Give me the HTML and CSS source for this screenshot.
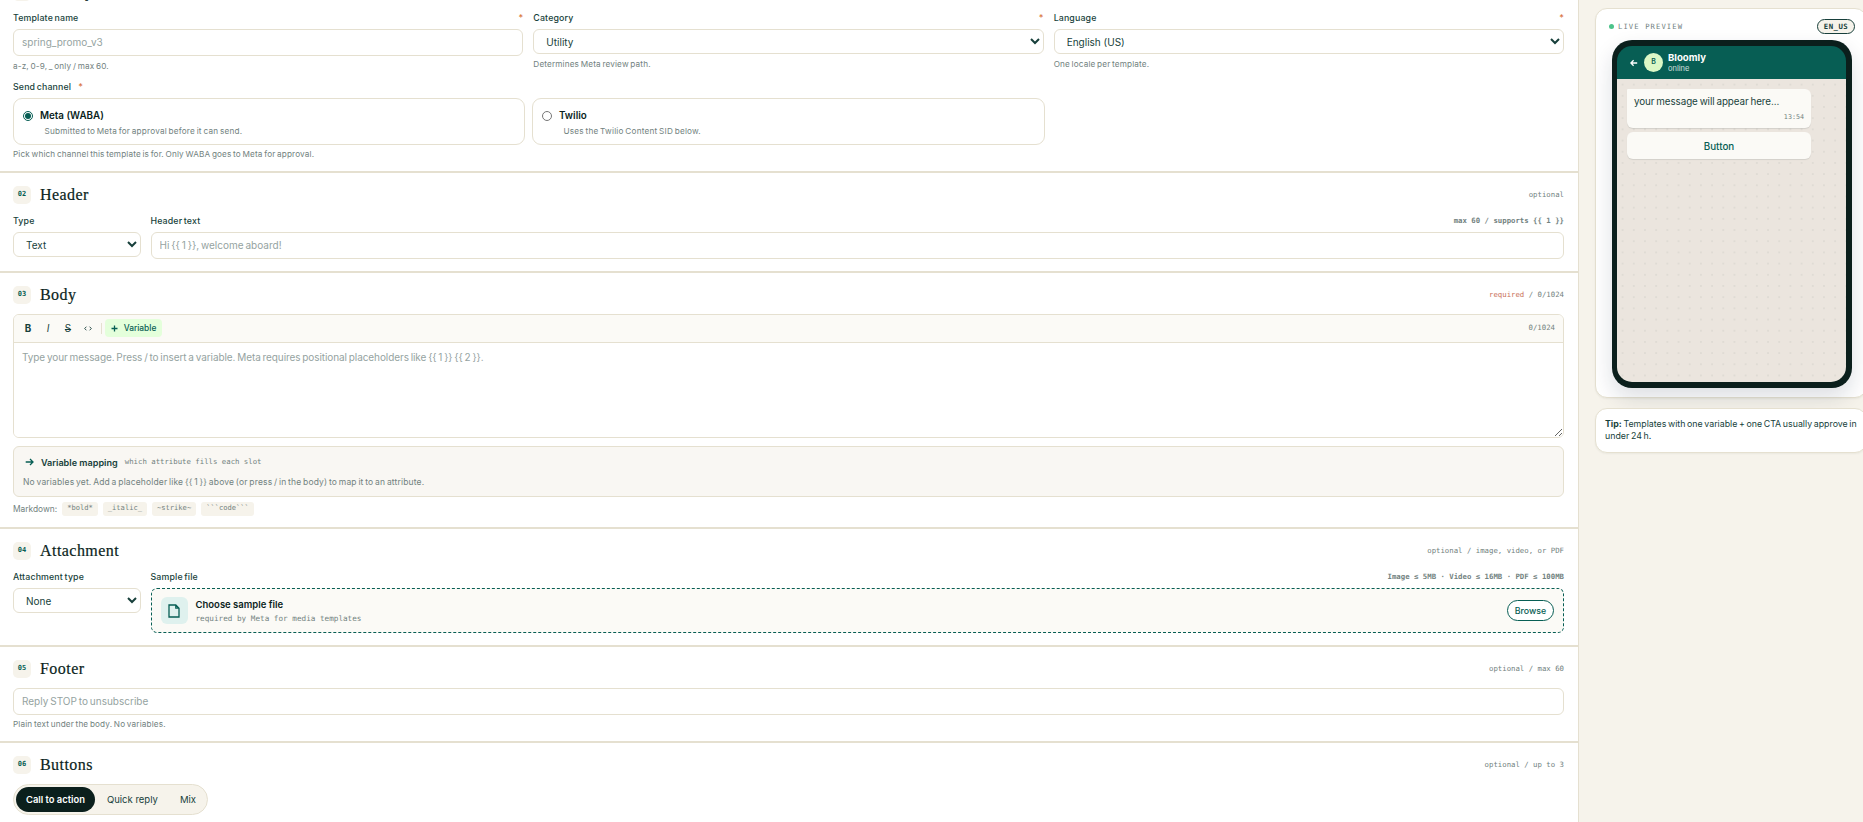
FILE: index.html
```html
<!DOCTYPE html>
<html lang="en">
  <head>
    <title>New template</title>
    <meta charset="utf-8" />
    <meta name="viewport" content="width=device-width, initial-scale=1.0" />
    <link rel="stylesheet" href="styles.css">
  </head>
  <body>
    <form class="editor">
      <section class="section">
        <div class="section-head">
          <span class="num">01</span>
          <h2>Identity</h2>
        </div>
        <div class="grid-3">
          <div class="field">
            <label for="name">Template name <span class="req">*</span></label>
            <input id="name" type="text" placeholder="spring_promo_v3" />
            <p class="help">a-z, 0-9, _ only / max 60.</p>
          </div>
          <div class="field">
            <label for="category">Category <span class="req">*</span></label>
            <select id="category"><option>Utility</option></select>
            <p class="help">Determines Meta review path.</p>
          </div>
          <div class="field">
            <label for="language">Language <span class="req">*</span></label>
            <select id="language"><option>English (US)</option></select>
            <p class="help">One locale per template.</p>
          </div>
        </div>
        <div class="channel-label">Send channel <span class="req">*</span></div>
        <div class="channels">
          <label class="channel">
            <span class="channel-name"><input type="radio" name="channel" checked /> Meta (WABA)</span>
            <span class="channel-sub">Submitted to Meta for approval before it can send.</span>
          </label>
          <label class="channel">
            <span class="channel-name"><input type="radio" name="channel" /> Twilio</span>
            <span class="channel-sub">Uses the Twilio Content SID below.</span>
          </label>
        </div>
        <p class="help">Pick which channel this template is for. Only WABA goes to Meta for approval.</p>
      </section>

      <section class="section">
        <div class="section-head">
          <span class="num">02</span>
          <h2>Header</h2>
          <span class="meta">optional</span>
        </div>
        <div class="grid-side">
          <div class="field">
            <label for="type">Type</label>
            <select id="type"><option>Text</option></select>
          </div>
          <div class="field">
            <label for="header">Header text <span class="meta strong">max 60 / supports {{ 1 }}</span></label>
            <input id="header" type="text" placeholder="Hi {{ 1 }}, welcome aboard!" />
          </div>
        </div>
      </section>

      <section class="section">
        <div class="section-head">
          <span class="num">03</span>
          <h2>Body</h2>
          <span class="meta"><span class="required">required</span> / 0/1024</span>
        </div>
        <div class="message">
          <div class="toolbar">
            <button type="button"><b>B</b></button>
            <button type="button"><i>I</i></button>
            <button type="button"><s>S</s></button>
            <button type="button">
              <svg class="thin" width="8" height="5" viewBox="0 0 8 5"><path d="M2.4.7.7 2.5l1.7 1.8M5.6.7l1.7 1.8-1.7 1.8" /></svg>
            </button>
            <span class="divider"></span>
            <button type="button" class="variable">
              <svg width="7" height="7" viewBox="0 0 7 7"><path d="M3.5.5v6M.5 3.5h6" /></svg>
              Variable
            </button>
            <span class="meta">0/1024</span>
          </div>
          <textarea placeholder="Type your message. Press / to insert a variable. Meta requires positional placeholders like {{ 1 }} {{ 2 }}."></textarea>
        </div>
        <div class="mapping">
          <div class="mapping-head">
            <svg width="9" height="8" viewBox="0 0 9 8"><path d="M.7 4h7.2M5 1l3 3-3 3" /></svg>
            <strong>Variable mapping</strong>
            <span class="meta">which attribute fills each slot</span>
          </div>
          <p>No variables yet. Add a placeholder like {{ 1 }} above (or press / in the body) to map it to an attribute.</p>
        </div>
        <div class="markdown">
          <span>Markdown:</span>
          <code>*bold*</code>
          <code>_italic_</code>
          <code>~strike~</code>
          <code>```code```</code>
        </div>
      </section>

      <section class="section">
        <div class="section-head">
          <span class="num">04</span>
          <h2>Attachment</h2>
          <span class="meta">optional / image, video, or PDF</span>
        </div>
        <div class="grid-side">
          <div class="field">
            <label for="attachment">Attachment type</label>
            <select id="attachment"><option>None</option></select>
          </div>
          <div class="field">
            <div class="field-label">Sample file <span class="meta strong">Image ≤ 5MB · Video ≤ 16MB · PDF ≤ 100MB</span></div>
            <div class="dropzone">
              <span class="file-icon">
                <svg width="12" height="14" viewBox="0 0 12 14"><path d="M1 1h6.8L11 4.2V13H1zM7.8 1v3.2H11" /></svg>
              </span>
              <div class="file-text">
                <strong>Choose sample file</strong>
                <span class="meta">required by Meta for media templates</span>
              </div>
              <button type="button" class="browse">Browse</button>
            </div>
          </div>
        </div>
      </section>

      <section class="section">
        <div class="section-head">
          <span class="num">05</span>
          <h2>Footer</h2>
          <span class="meta">optional / max 60</span>
        </div>
        <input type="text" placeholder="Reply STOP to unsubscribe" />
        <p class="help">Plain text under the body. No variables.</p>
      </section>

      <section class="section">
        <div class="section-head">
          <span class="num">06</span>
          <h2>Buttons</h2>
          <span class="meta">optional / up to 3</span>
        </div>
        <div class="tabs">
          <button type="button" class="active">Call to action</button>
          <button type="button">Quick reply</button>
          <button type="button">Mix</button>
        </div>
      </section>
    </form>

    <aside class="sidebar">
      <div class="card preview">
        <div class="preview-head">
          <span class="dot"></span>
          <span class="live">LIVE PREVIEW</span>
          <span class="locale">EN_US</span>
        </div>
        <div class="phone">
          <div class="phone-head">
            <svg width="8" height="8" viewBox="0 0 8 8"><path d="M7.2 4H1M3.6 1.3.9 4l2.7 2.7" /></svg>
            <span class="avatar">B</span>
            <div>
              <div class="contact">Bloomly</div>
              <div class="status">online</div>
            </div>
          </div>
          <div class="chat">
            <div class="bubble">
              <p>your message will appear here...</p>
              <time>13:54</time>
            </div>
            <div class="reply">Button</div>
          </div>
        </div>
      </div>
      <div class="card tip"><strong>Tip:</strong> Templates with one variable + one CTA usually approve in<br />under 24 h.</div>
    </aside>
  </body>
</html>
```

FILE: styles.css
```css
* {
  box-sizing: border-box;
}

:root {
  --ink: #0b1f1c;
  --text: #173f3b;
  --green: #075e54;
  --muted: #728280;
  --line: #e5e0d0;
  --cream: #f6f3eb;
  --paper: #fbfaf6;
  --mono: 'DejaVu Sans Mono', monospace;
}

body {
  display: flex;
  height: 822px;
  margin: 0;
  overflow: hidden;
  background: var(--cream);
  color: var(--text);
  font-family: Inter, sans-serif;
  font-size: 9px;
}

p,
h2 {
  margin: 0;
}

button,
input,
select,
textarea {
  margin: 0;
  font-family: inherit;
}

svg {
  display: block;
  fill: none;
  stroke: currentColor;
  stroke-width: 1.3;
}

svg.thin {
  stroke-width: 0.9;
}

.editor {
  flex: none;
  width: 1579px;
  height: 852px;
  margin-top: -30px;
  background: #fff;
  border-right: 1px solid var(--line);
}

.section {
  padding: 13px 14px 11px 13px;
  border-bottom: 2px solid var(--line);
}

.section:last-child {
  border-bottom: 0;
}

.section-head {
  display: flex;
  align-items: center;
  height: 18px;
  margin-bottom: 10px;
}

.num {
  width: 18px;
  height: 18px;
  border-radius: 5px;
  background: var(--cream);
  color: var(--green);
  font: bold 7px/17px var(--mono);
  text-align: center;
}

h2 {
  margin-left: 9px;
  color: var(--ink);
  font: 400 16px/18px 'Liberation Serif', serif;
  letter-spacing: 0.45px;
  -webkit-text-stroke: 0.2px var(--ink);
}

.meta {
  color: var(--muted);
  font: 400 7.33px/10px var(--mono);
  letter-spacing: 0;
  word-spacing: 0;
}

.section-head .meta,
.field .meta.strong,
.toolbar .meta {
  margin-left: auto;
}

.meta.strong {
  font-weight: 600;
}

.field .meta.strong {
  line-height: 14px;
}

.required {
  color: #c9725b;
}

.grid-3 {
  display: grid;
  grid-template-columns: repeat(3, 1fr);
  gap: 10px;
}

.grid-side {
  display: grid;
  grid-template-columns: 128px 1fr;
  gap: 9.5px;
  margin-bottom: 12px;
}

.section:has(.grid-side) {
  padding-bottom: 0;
}

.field > label,
.field-label,
.channel-label {
  display: flex;
  height: 14px;
  margin-bottom: 4px;
  color: var(--text);
  font-size: 8.8px;
  font-weight: 500;
  line-height: 14px;
  letter-spacing: 0.15px;
  word-spacing: -0.9px;
}

.req {
  color: #d9763f;
  font-size: 9px;
}

.field .req {
  margin-left: auto;
}

input[type='text'],
select {
  display: block;
  width: 100%;
  border: 1px solid var(--line);
  border-radius: 6px;
  background: #fff;
  color: var(--text);
  font-size: 10px;
}

input[type='text'] {
  height: 27px;
  padding: 0 8px 1px;
  letter-spacing: 0;
  word-spacing: -0.9px;
}

select {
  height: 25px;
  padding: 0 0 0 8px;
}

::placeholder {
  color: #95a3a1;
}

.help {
  margin-top: 3px;
  color: var(--muted);
  font-size: 8.2px;
  line-height: 12px;
  letter-spacing: 0.14px;
  word-spacing: -0.8px;
}

.field .help {
  margin-top: 4px;
}

.channel-label {
  gap: 7px;
  margin-top: 8px;
}

.channels {
  display: grid;
  grid-template-columns: 512px 513px;
  gap: 7px;
}

.channel {
  display: flex;
  flex-direction: column;
  height: 47px;
  padding: 9px 9px 0;
  border: 1px solid var(--line);
  border-radius: 9px;
}

.channel-name {
  display: flex;
  gap: 7px;
  align-items: center;
  height: 15px;
  color: var(--ink);
  font-size: 9.8px;
  font-weight: 600;
}

.channel-name input {
  width: 10px;
  height: 10px;
  accent-color: var(--green);
}

.channel-sub {
  margin-left: 21.5px;
  color: var(--muted);
  font-size: 8.2px;
  line-height: 16px;
  letter-spacing: 0.2px;
  word-spacing: -0.8px;
}

.message {
  height: 124px;
  border: 1px solid var(--line);
  border-radius: 6px;
  overflow: hidden;
}

.toolbar {
  display: flex;
  align-items: center;
  height: 28px;
  padding: 0 8px 1px 4px;
  border-bottom: 1px solid var(--line);
  background: var(--paper);
}

.toolbar button {
  display: flex;
  justify-content: center;
  align-items: center;
  width: 20px;
  height: 18px;
  padding: 0;
  border: 0;
  background: none;
  color: var(--text);
  font-size: 9.8px;
}

.toolbar .divider {
  width: 1px;
  height: 11px;
  margin: 0 3px 0 3px;
  background: var(--line);
}

.toolbar .variable {
  gap: 6px;
  width: 57px;
  border-radius: 4px;
  background: #e4ffdb;
  color: var(--green);
  font-size: 8.4px;
  font-weight: 500;
}

textarea {
  display: block;
  width: 100%;
  height: 94px;
  padding: 6px 8px;
  border: 0;
  background: #fff;
  font-size: 10px;
  line-height: 16px;
  letter-spacing: -0.08px;
  word-spacing: -0.9px;
  resize: vertical;
}

.mapping {
  height: 51px;
  margin-top: 8px;
  padding: 8px 9px;
  border: 1px solid var(--line);
  border-radius: 6px;
  background: #f9f7f3;
}

.mapping-head {
  display: flex;
  align-items: center;
  height: 14px;
  margin-bottom: 6px;
  padding-left: 2px;
}

.mapping-head svg {
  color: var(--green);
}

.mapping-head strong {
  margin: 0 7px 0 7px;
  font-size: 9.1px;
  font-weight: 600;
}

.mapping p {
  color: var(--muted);
  font-size: 8.5px;
  line-height: 14px;
  letter-spacing: 0.15px;
  word-spacing: -0.8px;
}

.markdown {
  display: flex;
  gap: 5px;
  height: 14px;
  margin-top: 5px;
  color: var(--muted);
  font-size: 8.4px;
  line-height: 14px;
}

.markdown code {
  padding: 0 5px;
  border-radius: 3px;
  background: var(--cream);
  font: 7.1px/12px var(--mono);
}

.dropzone {
  display: flex;
  align-items: center;
  height: 45px;
  padding: 0 9px;
  border: 1px dashed var(--green);
  border-radius: 6px;
  background: var(--paper);
}

.file-icon {
  display: grid;
  place-items: center;
  width: 27px;
  height: 27px;
  margin-right: 8px;
  border-radius: 6px;
  background: #dff1ee;
  color: var(--green);
}

.file-text {
  display: flex;
  flex-direction: column;
  gap: 3px;
}

.file-text strong {
  color: var(--ink);
  font-size: 9.5px;
  font-weight: 600;
  line-height: 13px;
}

.file-text .meta {
  font-size: 7.67px;
}

.browse {
  width: 47px;
  height: 21px;
  margin-left: auto;
  padding: 0;
  border: 1px solid var(--green);
  border-radius: 11px;
  background: #fff;
  color: var(--green);
  font-size: 8.8px;
  font-weight: 500;
}

.tabs {
  display: flex;
  gap: 2px;
  width: 195px;
  height: 31px;
  padding: 2px;
  border: 1px solid var(--line);
  border-radius: 16px;
  background: var(--cream);
}

.tabs button {
  padding: 0 10px;
  border: 0;
  border-radius: 13px;
  background: none;
  color: var(--text);
  font-size: 9.5px;
  white-space: nowrap;
}

.tabs .active {
  background: var(--ink);
  color: #fff;
  font-size: 9.4px;
  font-weight: 600;
}

.sidebar {
  flex: none;
  width: 289px;
  padding: 8px 0 0 16px;
}

.card {
  width: 272px;
  border: 1px solid var(--line);
  border-radius: 12px;
  background: #fff;
  box-shadow: 0 1px 2px rgba(11, 31, 28, 0.05);
}

.preview {
  height: 390px;
  padding: 10px 11px 0 13px;
}

.preview-head {
  display: flex;
  align-items: center;
  height: 15px;
  margin-bottom: 6px;
}

.dot {
  width: 5px;
  height: 5px;
  margin-right: 4px;
  border-radius: 50%;
  background: #4cc38a;
}

.live {
  color: var(--muted);
  font: 7.2px/15px var(--mono);
  letter-spacing: 1.1px;
}

.locale {
  width: 38px;
  height: 15px;
  margin-left: auto;
  border: 1px solid var(--text);
  border-radius: 8px;
  background: var(--cream);
  font: bold 7.3px/13px var(--mono);
  letter-spacing: 0.5px;
  text-align: center;
}

.phone {
  width: 240px;
  height: 348px;
  margin-left: 3px;
  padding: 6px 6px 6px 5px;
  border-radius: 20px;
  background: var(--ink);
  box-shadow: 0 10px 22px rgba(11, 31, 60, 0.14);
}

.phone-head {
  display: flex;
  align-items: center;
  height: 33px;
  padding-left: 13px;
  border-radius: 15px 15px 0 0;
  background: var(--green);
  color: #fff;
}

.avatar {
  width: 19px;
  height: 19px;
  margin: 0 5px 0 6px;
  border-radius: 50%;
  background: #dcf8c6;
  color: var(--green);
  font-size: 7px;
  font-weight: 600;
  line-height: 17px;
  text-align: center;
}

.contact {
  font-size: 9.6px;
  font-weight: 700;
  line-height: 12px;
}

.status {
  font-size: 7.5px;
  line-height: 9px;
  opacity: 0.8;
}

.chat {
  height: 303px;
  padding: 10px;
  border-radius: 0 0 15px 15px;
  background: #ebe5de radial-gradient(circle, #dfdbd4 1px, transparent 1.2px) 0 0 / 11.2px 11.2px;
}

.bubble,
.reply {
  width: 184px;
  border-radius: 6px;
  background: var(--paper);
  box-shadow: 0 1px 1px rgba(11, 31, 28, 0.1);
}

.bubble {
  height: 39px;
  padding: 5px 7px;
  border-top-left-radius: 1px;
}

.bubble p {
  font-size: 9.8px;
  line-height: 16px;
  letter-spacing: -0.06px;
  word-spacing: -0.8px;
}

.bubble time {
  display: block;
  color: var(--muted);
  font: 6.7px/14px var(--mono);
  text-align: right;
}

.reply {
  height: 27px;
  margin-top: 4px;
  color: var(--green);
  font-size: 9.8px;
  font-weight: 500;
  line-height: 29px;
  text-align: center;
}

.tip {
  height: 45px;
  margin-top: 10px;
  padding: 9px;
  font-size: 8.8px;
  line-height: 12px;
  word-spacing: -0.8px;
  white-space: nowrap;
}
```
